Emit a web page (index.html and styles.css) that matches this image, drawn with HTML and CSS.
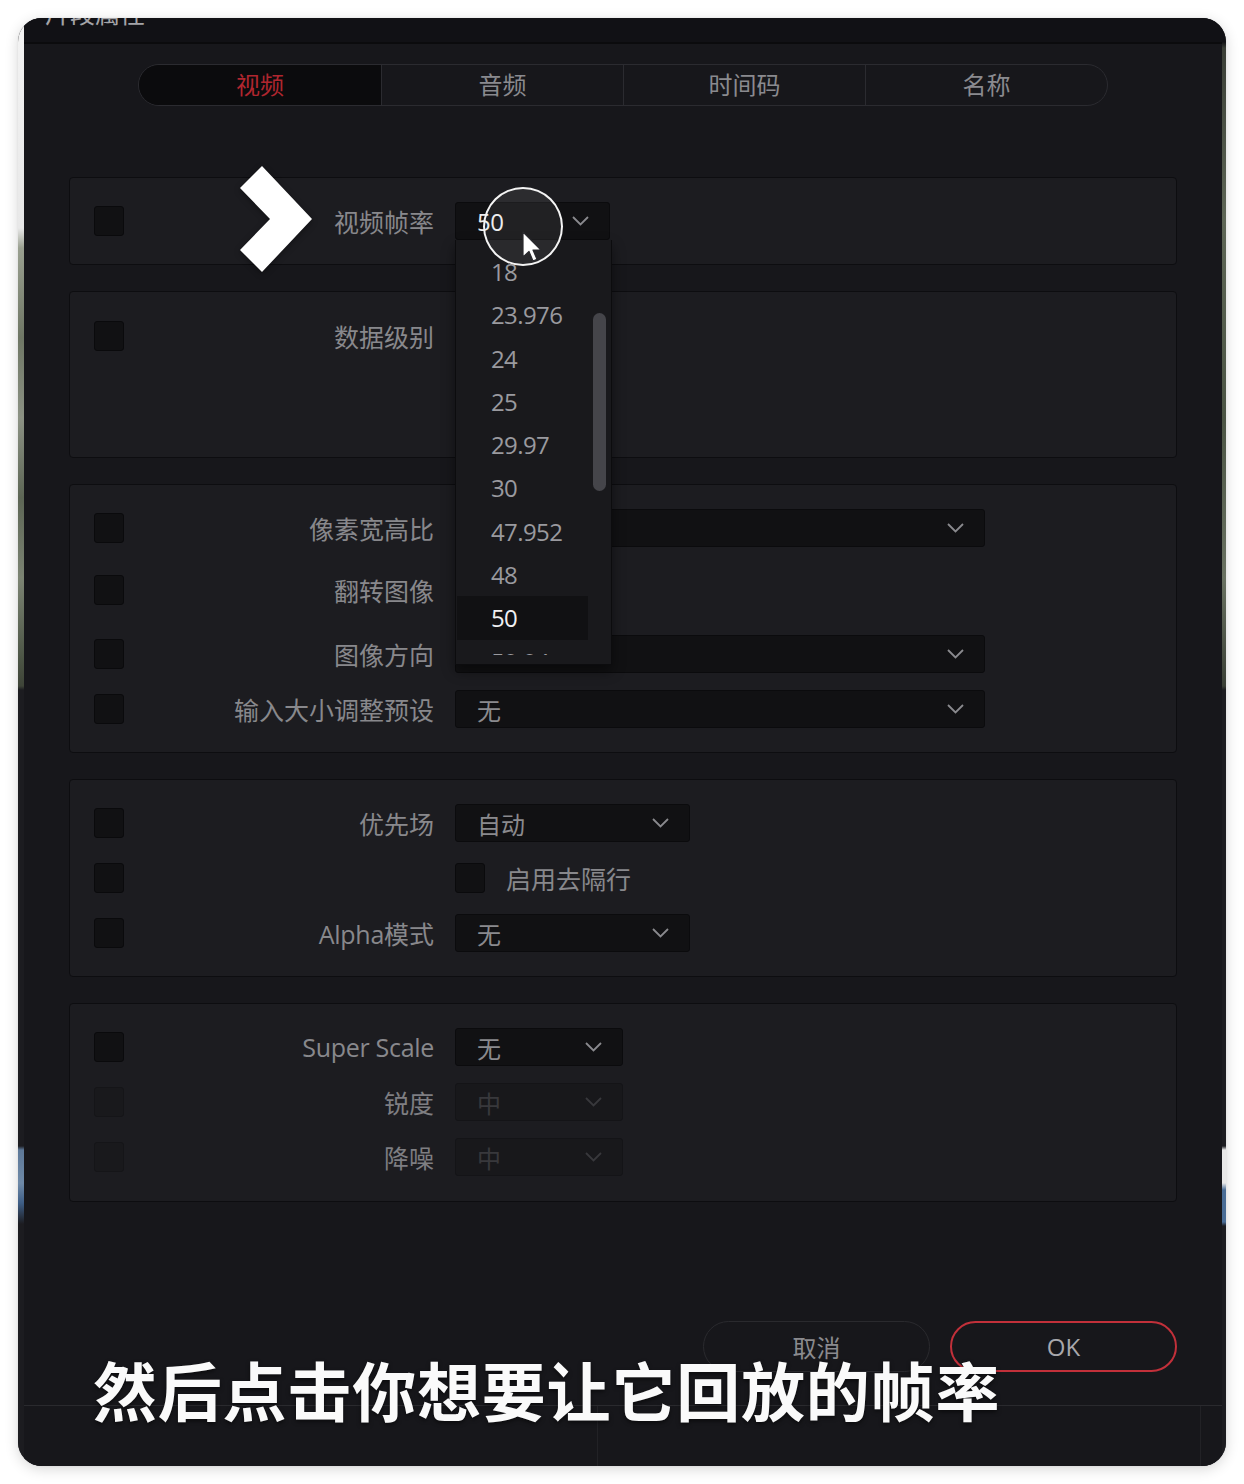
FILE: index.html
```html
<!DOCTYPE html>
<html lang="zh-CN">
<head>
<meta charset="utf-8">
<title>片段属性</title>
<link rel="stylesheet" href="styles.css">
</head>
<body>
<div class="frame">
  <div class="card">
    <div class="strip strip-left"></div>
    <div class="dialog">
      <div class="titlebar"><span class="title">片段属性</span></div>

      <div class="tabs">
        <div class="tab active">视频</div>
        <div class="tab">音频</div>
        <div class="tab">时间码</div>
        <div class="tab">名称</div>
      </div>

      <div class="panels">
        <section class="panel p1">
          <div class="row">
            <svg class="pointer" width="72" height="108" viewBox="0 0 72 108"><polygon points="0,23 22,1 72,54 22,107 0,85 30,54" fill="#ffffff"/></svg>
            <span class="cb"></span>
            <span class="lbl">视频帧率</span>
            <div class="sel w-fr open">
              <span class="val bright">50</span>
              <svg class="chev" width="17" height="10" viewBox="0 0 17 10"><polyline points="1,1 8.5,8.5 16,1" fill="none" stroke="#8a8a8e" stroke-width="1.8"/></svg>
              <div class="menu">
                <ul class="menu-list">
                  <li>18</li>
                  <li>23.976</li>
                  <li>24</li>
                  <li>25</li>
                  <li>29.97</li>
                  <li>30</li>
                  <li>47.952</li>
                  <li>48</li>
                  <li class="cur">50</li>
                  <li>59.94</li>
                </ul>
                <span class="scroll"></span>
              </div>
              <div class="touch">
                <svg class="arrow" width="22" height="32" viewBox="0 0 22 32"><path d="M1,1 L1,26 L7,20.5 L11,30 L15,28.3 L11,19 L19,19 Z" fill="#ffffff" stroke="#2a2a2e" stroke-width="1.2" stroke-linejoin="round"/></svg>
              </div>
            </div>
          </div>
        </section>

        <section class="panel p2">
          <div class="row">
            <span class="cb"></span>
            <span class="lbl">数据级别</span>
          </div>
        </section>

        <section class="panel p3">
          <div class="row">
            <span class="cb"></span>
            <span class="lbl">像素宽高比</span>
            <div class="sel w-wide">
              <span class="val"></span>
              <svg class="chev" width="17" height="10" viewBox="0 0 17 10"><polyline points="1,1 8.5,8.5 16,1" fill="none" stroke="#8a8a8e" stroke-width="1.8"/></svg>
            </div>
          </div>
          <div class="row m1">
            <span class="cb"></span>
            <span class="lbl">翻转图像</span>
          </div>
          <div class="row m2">
            <span class="cb"></span>
            <span class="lbl">图像方向</span>
            <div class="sel w-wide">
              <span class="val"></span>
              <svg class="chev" width="17" height="10" viewBox="0 0 17 10"><polyline points="1,1 8.5,8.5 16,1" fill="none" stroke="#8a8a8e" stroke-width="1.8"/></svg>
            </div>
          </div>
          <div class="row">
            <span class="cb"></span>
            <span class="lbl">输入大小调整预设</span>
            <div class="sel w-wide">
              <span class="val">无</span>
              <svg class="chev" width="17" height="10" viewBox="0 0 17 10"><polyline points="1,1 8.5,8.5 16,1" fill="none" stroke="#8a8a8e" stroke-width="1.8"/></svg>
            </div>
          </div>
        </section>

        <section class="panel p4">
          <div class="row">
            <span class="cb"></span>
            <span class="lbl">优先场</span>
            <div class="sel w-mid">
              <span class="val">自动</span>
              <svg class="chev" width="17" height="10" viewBox="0 0 17 10"><polyline points="1,1 8.5,8.5 16,1" fill="none" stroke="#8a8a8e" stroke-width="1.8"/></svg>
            </div>
          </div>
          <div class="row">
            <span class="cb"></span>
            <span class="lbl"></span>
            <span class="cb inner"></span>
            <span class="check-lbl">启用去隔行</span>
          </div>
          <div class="row">
            <span class="cb"></span>
            <span class="lbl latin">Alpha<span class="cjk">模式</span></span>
            <div class="sel w-mid">
              <span class="val">无</span>
              <svg class="chev" width="17" height="10" viewBox="0 0 17 10"><polyline points="1,1 8.5,8.5 16,1" fill="none" stroke="#8a8a8e" stroke-width="1.8"/></svg>
            </div>
          </div>
        </section>

        <section class="panel p5">
          <div class="row">
            <span class="cb"></span>
            <span class="lbl latin">Super Scale</span>
            <div class="sel w-sm">
              <span class="val">无</span>
              <svg class="chev" width="17" height="10" viewBox="0 0 17 10"><polyline points="1,1 8.5,8.5 16,1" fill="none" stroke="#8a8a8e" stroke-width="1.8"/></svg>
            </div>
          </div>
          <div class="row disabled">
            <span class="cb"></span>
            <span class="lbl">锐度</span>
            <div class="sel w-sm">
              <span class="val">中</span>
              <svg class="chev" width="17" height="10" viewBox="0 0 17 10"><polyline points="1,1 8.5,8.5 16,1" fill="none" stroke="#38383c" stroke-width="1.8"/></svg>
            </div>
          </div>
          <div class="row disabled">
            <span class="cb"></span>
            <span class="lbl">降噪</span>
            <div class="sel w-sm">
              <span class="val">中</span>
              <svg class="chev" width="17" height="10" viewBox="0 0 17 10"><polyline points="1,1 8.5,8.5 16,1" fill="none" stroke="#38383c" stroke-width="1.8"/></svg>
            </div>
          </div>
        </section>
      </div>

      <div class="actions">
        <button class="btn">取消</button>
        <button class="btn ok">OK</button>
      </div>

      <div class="footer">
        <div class="foot-cell left"></div>
        <div class="foot-cell mid"></div>
        <div class="foot-cell right"></div>
      </div>
    </div>
    <div class="strip strip-right"></div>

    <div class="subtitle">然后点击你想要让它回放的帧率</div>
  </div>
</div>
</body>
</html>
```

FILE: styles.css
```css
* { box-sizing: border-box; }

html, body {
  margin: 0;
  padding: 0;
  background: #ffffff;
}

body {
  width: 1244px;
  height: 1484px;
  font-family: "Noto Sans CJK SC", "Open Sans", sans-serif;
}

.frame {
  padding: 18px;
}

.card {
  position: relative;
  width: 1208px;
  height: 1448px;
  border-radius: 24px;
  overflow: hidden;
  display: flex;
  background: #17171b;
  box-shadow: 0 3px 14px rgba(0, 0, 0, 0.16), 0 0 2px rgba(0, 0, 0, 0.08);
}

.strip {
  flex: 0 0 auto;
}

.strip-left {
  width: 6px;
  background:
    linear-gradient(to bottom,
      #f3f3f3 0px, #e8e8e8 210px,
      #9aa090 230px, #6f7765 320px, #8c9284 400px, #5d6655 480px, #7c8473 560px, #4d5646 640px, #3e4438 668px,
      #1c1c20 672px, #1c1c20 1128px,
      #5d7898 1132px, #6f8aa8 1165px, #3e5e86 1185px, #1c1c20 1206px, #1c1c20 100%);
}

.strip-right {
  width: 4px;
  background:
    linear-gradient(to bottom,
      #111115 0px, #111115 24px,
      #3a3e36 30px, #5e6656 200px, #4b5444 400px, #6a7262 560px, #3a3f35 668px,
      #1c1c20 672px, #1c1c20 1128px,
      #e8e8e8 1132px, #e8e8e8 1165px, #4a6d96 1172px, #4a6d96 1204px, #1c1c20 1208px, #1c1c20 100%);
}

.dialog {
  flex: 1 1 auto;
  display: flex;
  flex-direction: column;
  background: #17171b;
  min-width: 0;
}

/* title bar (cut off at top) */
.titlebar {
  height: 26px;
  background: #111115;
  border-bottom: 2px solid #0b0b0d;
  overflow: hidden;
  padding-left: 21px;
}
.title {
  display: block;
  margin-top: -18px;
  font-size: 25px;
  line-height: 25px;
  color: #a4a4a8;
}

/* tabs */
.tabs {
  margin: 20px 114px 0;
  height: 42px;
  display: grid;
  grid-template-columns: repeat(4, 1fr);
  border: 1.5px solid #2b2b30;
  border-radius: 21px;
  overflow: hidden;
}
.tab {
  display: flex;
  align-items: center;
  justify-content: center;
  font-size: 24px;
  line-height: 1;
  padding-bottom: 3px;
  color: #8a8a8f;
  border-left: 1.5px solid #2b2b30;
}
.tab:first-child { border-left: none; }
.tab.active {
  background: #0b0b0d;
  color: #b0262f;
}

/* panels */
.panels {
  margin: 71px 45px 0;
  display: flex;
  flex-direction: column;
  gap: 26px;
}
.panel {
  background: #1c1c20;
  border: 1px solid #0d0d10;
  border-radius: 4px;
  padding: 24px 0 24px;
  display: flex;
  flex-direction: column;
  gap: 17px;
}
.p1 { padding-bottom: 24px; }
.p2 { height: 167px; padding-top: 25px; }
.p4 { padding-bottom: 24px; }
.p5 { padding-bottom: 25px; }

.row {
  position: relative;
  height: 38px;
  display: flex;
  align-items: center;
  padding-left: 24px;
}
.row.m1 { margin-top: 7px; }
.row.m2 { margin-top: 9px; }

.cb {
  flex: 0 0 auto;
  width: 30px;
  height: 30px;
  background: #111113;
  border: 1px solid #0a0a0c;
  border-radius: 3px;
}

.lbl {
  flex: 0 0 auto;
  width: 310px;
  margin-right: 21px;
  text-align: right;
  font-size: 25px;
  line-height: 38px;
  color: #88888c;
  white-space: nowrap;
}
.lbl.latin {
  font-family: "Open Sans", "Noto Sans CJK SC", sans-serif;
  font-size: 25px;
  letter-spacing: -0.3px;
}
.lbl .cjk {
  font-family: "Noto Sans CJK SC", sans-serif;
  letter-spacing: 0;
}

.cb.inner {
  margin-right: 21px;
}
.check-lbl {
  font-size: 25px;
  color: #88888c;
}

/* selects */
.sel {
  position: relative;
  flex: 0 0 auto;
  height: 38px;
  background: #111113;
  border: 1px solid #0b0b0d;
  border-radius: 3px;
  display: flex;
  align-items: center;
  justify-content: space-between;
  padding: 0 20px 0 21px;
}
.w-fr { width: 155px; }
.w-wide { width: 530px; }
.w-mid { width: 235px; }
.w-sm { width: 168px; }

.val {
  font-size: 24px;
  color: #8a8a8e;
}
.val.bright {
  font-family: "Open Sans", sans-serif;
  color: #ececee;
  letter-spacing: -0.5px;
}
.chev { display: block; }

.disabled .cb {
  background: #19191c;
  border-color: #151518;
}
.disabled .lbl { color: #7e7e82; }
.disabled .sel {
  background: #18181b;
  border-color: #141417;
}
.disabled .val { color: #38383c; }

/* pointer chevron overlay */
.pointer {
  position: absolute;
  left: 170px;
  top: -37px;
  z-index: 3;
  filter: drop-shadow(0 2px 3px rgba(0, 0, 0, 0.35));
}

/* dropdown menu overlay */
.menu {
  position: absolute;
  left: -1px;
  top: 37px;
  width: 157px;
  height: 425px;
  background: #19191c;
  border: 1px solid #0c0c0e;
  border-top: none;
  box-shadow: 0 6px 12px rgba(0, 0, 0, 0.45);
  z-index: 5;
  padding-bottom: 9px;
}
.menu-list {
  list-style: none;
  margin: 0;
  padding: 10px 0 0 1px;
  height: 100%;
  overflow: hidden;
}
.menu-list li {
  height: 43.3px;
  line-height: 43.3px;
  padding-left: 34px;
  width: 131px;
  font-family: "Open Sans", sans-serif;
  font-size: 24px;
  letter-spacing: -0.6px;
  color: #9a9a9f;
}
.menu-list li.cur {
  background: #111113;
  color: #f0f0f2;
}
.scroll {
  position: absolute;
  left: 137px;
  top: 73px;
  width: 13px;
  height: 178px;
  border-radius: 7px;
  background: #45454a;
}

/* touch indicator overlay */
.touch {
  position: absolute;
  left: 27px;
  top: -16px;
  width: 80px;
  height: 79px;
  border-radius: 50%;
  border: 2.5px solid #f4f4f4;
  background: rgba(255, 255, 255, 0.07);
  z-index: 6;
}
.arrow {
  position: absolute;
  left: 37px;
  top: 42px;
}

/* buttons */
.actions {
  margin: 119px 45px 0 0;
  display: flex;
  justify-content: flex-end;
  gap: 20px;
}
.btn {
  width: 227px;
  height: 51px;
  border-radius: 26px;
  background: transparent;
  border: 1.5px solid #2a2a2e;
  color: #8a8a8e;
  font-family: "Noto Sans CJK SC", sans-serif;
  font-size: 24px;
  padding: 0;
}
.btn.ok {
  border: 2px solid #c2303a;
  font-family: "Open Sans", sans-serif;
  color: #a8a8ac;
}

/* footer strip */
.footer {
  margin-top: 33px;
  flex: 1 1 auto;
  display: flex;
  border-top: 1px solid #2a2a2e;
  background: #17171b;
}
.foot-cell { height: 100%; }
.foot-cell.left { width: 574px; border-right: 1px solid #222226; }
.foot-cell.mid { flex: 1 1 auto; border-right: 1px solid #222226; }
.foot-cell.right { width: 21px; }

/* subtitle overlay */
.subtitle {
  position: absolute;
  left: 75px;
  top: 1338px;
  font-family: "Noto Sans CJK SC", sans-serif;
  font-weight: 700;
  font-size: 64px;
  line-height: 64px;
  letter-spacing: 0.8px;
  color: #fafafa;
  white-space: nowrap;
  text-shadow: 0 2px 4px rgba(0, 0, 0, 0.55);
  z-index: 10;
}
```
